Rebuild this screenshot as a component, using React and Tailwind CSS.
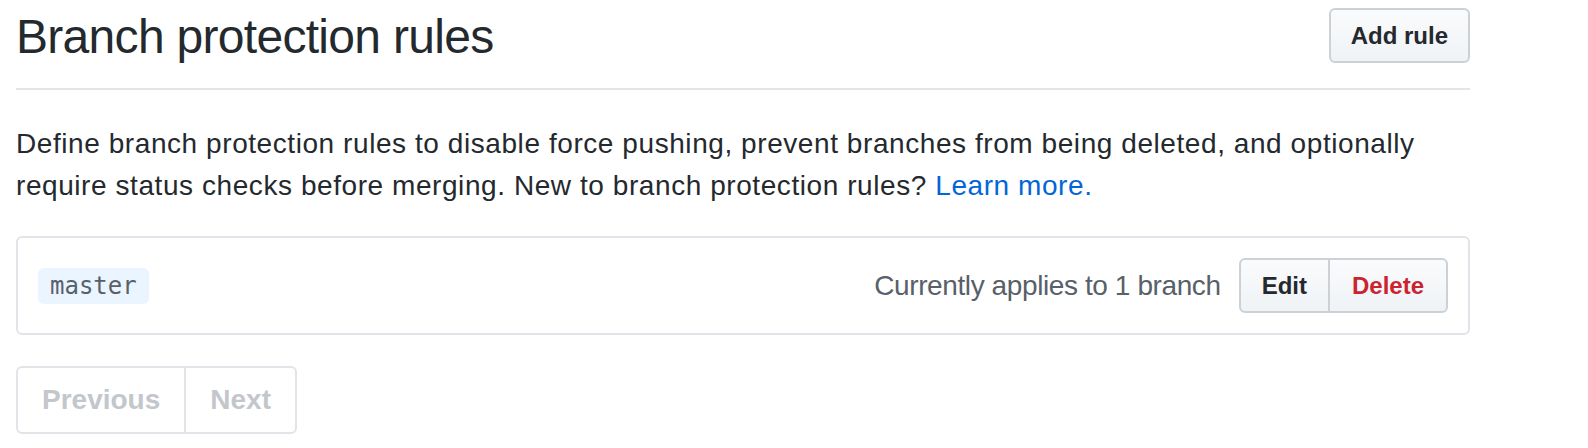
export default function App() {
  return (
    <div className="min-h-screen bg-white font-['Liberation_Sans',Arial,sans-serif] text-[#24292e]">
      <div className="ml-[16px] w-[1454px]">
        {/* header */}
        <div className="flex items-start justify-between border-b-2 border-[#e1e4e8] pt-[8px] pb-[25px]">
          <h2 className="mt-[5px] text-[48px] leading-[48px] tracking-[-0.7px] font-normal">
            Branch protection rules
          </h2>
          <button className="h-[55px] px-[20px] rounded-[6px] border-2 border-[#cdd0d4] bg-gradient-to-b from-[#fafbfc] to-[#eff3f6] text-[24px] font-bold text-[#24292e]">
            Add rule
          </button>
        </div>

        <p className="mt-[33px] text-[28px] leading-[42px] tracking-[0.57px]">
          Define branch protection rules to disable force pushing, prevent branches from being deleted, and optionally
          <br />
          require status checks before merging. New to branch protection rules?{' '}
          <a href="#" className="text-[#0366d6]">Learn more.</a>
        </p>

        {/* rule row */}
        <div className="mt-[29px] flex items-center justify-between rounded-[6px] border-2 border-[#e1e4e8] px-[20px] py-[20px]">
          <span className="rounded-[6px] bg-[#eaf5ff] px-[12px] py-[4px] font-['DejaVu_Sans_Mono',monospace] text-[24px] leading-[28px] text-[#586069]">
            master
          </span>
          <div className="flex items-center">
            <span className="mr-[18px] text-[28px] leading-[42px] tracking-[-0.4px] text-[#586069]">
              Currently applies to 1 branch
            </span>
            <div className="flex h-[55px] overflow-hidden rounded-[6px] border-2 border-[#cdd0d4] bg-gradient-to-b from-[#fafbfc] to-[#eff3f6] text-[24px] font-bold">
              <button className="px-[21px] text-[#24292e]">Edit</button>
              <button className="border-l-2 border-[#cdd0d4] px-[22px] text-[#cb2431]">Delete</button>
            </div>
          </div>
        </div>

        {/* pagination */}
        <div className="mt-[31px] inline-flex rounded-[6px] border-2 border-[#e1e4e8] text-[28px] leading-[40px] font-bold text-[#c3c7cc]">
          <span className="px-[24px] py-[12px]">Previous</span>
          <span className="border-l-2 border-[#e1e4e8] px-[24px] py-[12px]">Next</span>
        </div>
      </div>
    </div>
  );
}
